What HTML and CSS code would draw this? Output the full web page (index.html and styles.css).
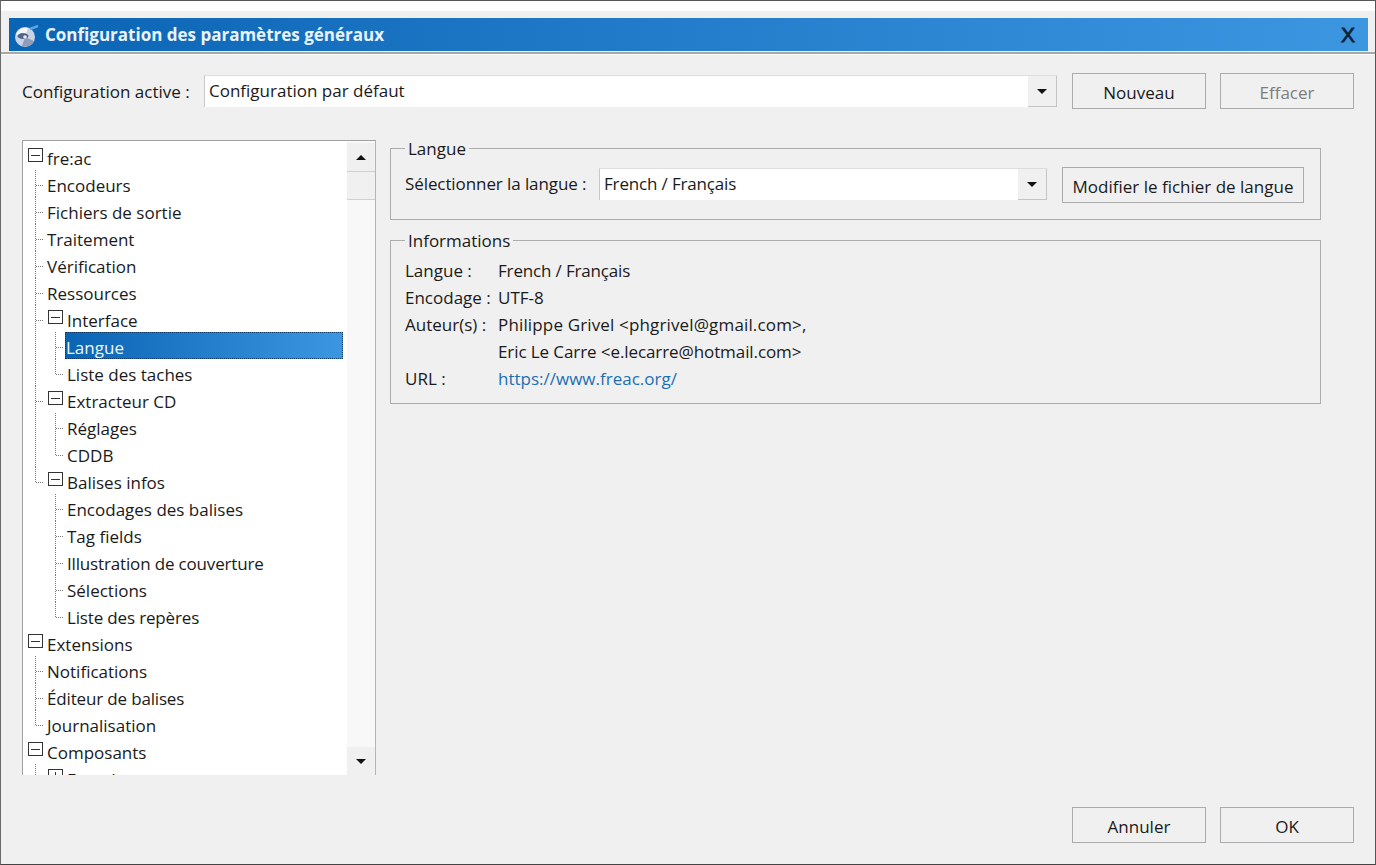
FILE: index.html
```html
<!DOCTYPE html>
<html lang="fr">
<head>
<meta charset="utf-8">
<title>Configuration des paramètres généraux</title>
<link rel="stylesheet" href="styles.css">
</head>
<body>
<div class="window">
  <div class="top-strip"></div>
  <header class="titlebar">
    <svg class="app-icon" width="26" height="24" viewBox="0 0 26 24">
      <circle cx="12" cy="14" r="10" fill="#c9d3e4"/>
      <path d="M3 12a10 10 0 0 1 12-7l-3 9z" fill="#f4f6fb"/>
      <path d="M12 14l9 4a10 10 0 0 1-12 5z" fill="#8f9dbb"/>
      <ellipse cx="10" cy="13" rx="5.500" ry="3" fill="#51658c"/>
      <circle cx="12" cy="14" r="1.800" fill="#e6ebf5"/>
      <path d="M17 6l8-3" stroke="#5aa5e6" stroke-width="2.500" fill="none"/>
    </svg>
    <span class="title-text">Configuration des paramètres généraux</span>
    <span class="close">X</span>
  </header>
  <div class="title-rule"></div>

  <div class="config-row">
    <span class="config-label">Configuration active :</span>
    <div class="combo combo-main">
      <span class="combo-value">Configuration par défaut</span>
      <span class="combo-btn"><i class="arrow-down"></i></span>
    </div>
    <button class="btn">Nouveau</button>
    <button class="btn btn-disabled">Effacer</button>
  </div>

  <main class="content">
    <nav class="tree">
      <ul class="tree-root">
        <li>
          <div class="row"><i class="box"></i><span class="label">fre:ac</span></div>
          <ul class="level1">
            <li><div class="row"><span class="label">Encodeurs</span></div></li>
            <li><div class="row"><span class="label">Fichiers de sortie</span></div></li>
            <li><div class="row"><span class="label">Traitement</span></div></li>
            <li><div class="row"><span class="label">Vérification</span></div></li>
            <li><div class="row"><span class="label">Ressources</span></div></li>
            <li>
              <div class="row"><i class="box"></i><span class="label">Interface</span></div>
              <ul class="level2">
                <li><div class="row"><span class="label selected">Langue</span></div></li>
                <li><div class="row"><span class="label">Liste des taches</span></div></li>
              </ul>
            </li>
            <li>
              <div class="row"><i class="box"></i><span class="label">Extracteur CD</span></div>
              <ul class="level2">
                <li><div class="row"><span class="label">Réglages</span></div></li>
                <li><div class="row"><span class="label">CDDB</span></div></li>
              </ul>
            </li>
            <li>
              <div class="row"><i class="box"></i><span class="label">Balises infos</span></div>
              <ul class="level2">
                <li><div class="row"><span class="label">Encodages des balises</span></div></li>
                <li><div class="row"><span class="label">Tag fields</span></div></li>
                <li><div class="row"><span class="label tight">Illustration de couverture</span></div></li>
                <li><div class="row"><span class="label">Sélections</span></div></li>
                <li><div class="row"><span class="label tight">Liste des repères</span></div></li>
              </ul>
            </li>
          </ul>
        </li>
        <li>
          <div class="row"><i class="box"></i><span class="label">Extensions</span></div>
          <ul class="level1">
            <li><div class="row"><span class="label">Notifications</span></div></li>
            <li><div class="row"><span class="label tight">Éditeur de balises</span></div></li>
            <li><div class="row"><span class="label">Journalisation</span></div></li>
          </ul>
        </li>
        <li>
          <div class="row"><i class="box"></i><span class="label">Composants</span></div>
          <ul class="level1">
            <li><div class="row"><i class="box box-plus"></i><span class="label">Encodeurs</span></div></li>
          </ul>
        </li>
      </ul>
      <div class="scrollbar">
        <span class="sb-btn"><i class="arrow-up"></i></span>
        <span class="sb-thumb"></span>
        <span class="sb-track"></span>
        <span class="sb-btn sb-btn-down"><i class="arrow-down"></i></span>
      </div>
    </nav>

    <section class="panel">
      <fieldset class="group group-lang">
        <legend>Langue</legend>
        <span class="lang-label tight-s">Sélectionner la langue :</span>
        <div class="combo combo-lang">
          <span class="combo-value tight">French / Français</span>
          <span class="combo-btn"><i class="arrow-down"></i></span>
        </div>
        <button class="btn btn-edit">Modifier le fichier de langue</button>
      </fieldset>
      <fieldset class="group group-info">
        <legend>Informations</legend>
        <dl class="info">
          <dt>Langue :</dt><dd class="tight">French / Français</dd>
          <dt>Encodage :</dt><dd>UTF-8</dd>
          <dt>Auteur(s) :</dt><dd class="wide">Philippe Grivel &lt;phgrivel@gmail.com&gt;,</dd>
          <dt></dt><dd class="tight-s">Eric Le Carre &lt;e.lecarre@hotmail.com&gt;</dd>
          <dt>URL :</dt><dd><a class="link" href="#">https://www.freac.org/</a></dd>
        </dl>
      </fieldset>
    </section>
  </main>

  <footer class="actions">
    <button class="btn">Annuler</button>
    <button class="btn">OK</button>
  </footer>
</div>
</body>
</html>
```

FILE: styles.css
```css
* { box-sizing: border-box; }
html, body { margin: 0; padding: 0; }
body {
  width: 1376px;
  height: 865px;
  overflow: hidden;
  font-family: "Open Sans", "Noto Sans", sans-serif;
  font-size: 17px;
  color: #1a1a1a;
  background: #f0f0f0;
}
ul { list-style: none; margin: 0; padding: 0; }
i { display: block; }
.tight { letter-spacing: -0.16px; }
.tight-s { letter-spacing: -0.09px; }
.wide { letter-spacing: 0.15px; }

.window {
  width: 1376px;
  height: 865px;
  display: flex;
  flex-direction: column;
  background: #f0f0f0;
  border-top: 1px solid #555;
  border-left: 1px solid #6a6a6a;
  border-bottom: 1px solid #444;
  border-right: 1px solid #555;
}
.top-strip { height: 10px; background: #fff; flex: none; }

.titlebar {
  flex: none;
  height: 33px;
  margin: 7px 7px 0 8px;
  padding: 0 13px 0 4px;
  display: flex;
  align-items: center;
  background: linear-gradient(90deg, #0a64b4 0%, #3c96e0 100%);
}
.app-icon { flex: none; margin-right: 6px; }
.title-text {
  flex: 1;
  font-size: 17px;
  font-weight: 700;
  color: #eaf3fb;
}
.close { font-size: 21px; font-weight: 400; color: #0c2238; font-family: "Liberation Sans", sans-serif; -webkit-text-stroke: 0.8px #0c2238; }
.title-rule {
  flex: none;
  height: 3px;
  margin-top: 1px;
  border-top: 1px solid #a8a8a8;
  border-bottom: 1px solid #fff;
  background: #a8a8a8;
}

.config-row {
  flex: none;
  height: 36px;
  margin-top: 18px;
  padding: 0 21px;
  display: flex;
  align-items: center;
}
.config-label { width: 182px; flex: none; }
.combo {
  display: flex;
  height: 32px;
  background: #fff;
  border-left: 1px solid #c8c8c8;
  border-top: 1px solid #ddd;
  flex: none;
}
.combo-main { width: 853px; margin-right: 15px; }
.combo-lang { width: 448px; margin-right: 15px; }
.combo-value { flex: 1; padding-left: 4px; line-height: 30px; }
.combo-btn {
  width: 29px;
  background: #f0f0f0;
  border: 1px solid #c4c4c4;
  border-width: 0 1px 1px 0;
  display: flex;
  align-items: center;
  justify-content: center;
}
.arrow-down { width: 0; height: 0; border: 5px solid transparent; border-top: 5px solid #111; border-bottom: 0; }
.arrow-up { width: 0; height: 0; border: 5px solid transparent; border-bottom: 5px solid #111; border-top: 0; }

.btn {
  flex: none;
  width: 134px;
  height: 36px;
  margin: 0;
  padding: 2px 0 0;
  font: inherit;
  color: #1a1a1a;
  background: #f0f0f0;
  border: 1px solid #ababab;
}
.btn + .btn { margin-left: 14px; }
.btn-disabled { color: #7d7d7d; }
.btn-edit { width: 242px; margin: -1px 0 0; height: 36px; }

.content {
  flex: 1;
  display: flex;
  min-height: 0;
  padding: 31px 0 0 21px;
}
.tree {
  flex: none;
  width: 354px;
  height: 635px;
  display: flex;
  background: #fff;
  border-left: 1px solid #a0a0a0;
  border-top: 1px solid #a0a0a0;
  border-right: 1px solid #b5b5b5;
}
.tree-root {
  flex: 1;
  min-width: 0;
  overflow: hidden;
  padding: 2px 4px 0 5px;
}
.row { display: flex; align-items: center; height: 27px; position: relative; }
.box {
  flex: none;
  width: 15px;
  height: 14px;
  margin: -3px 2px 0 0;
  border: 1px solid #333;
  background: linear-gradient(#333, #333) center / 9px 1px no-repeat #fff;
  position: relative;
  z-index: 1;
}
.box-plus {
  background:
    linear-gradient(#333, #333) center / 9px 1px no-repeat,
    linear-gradient(#333, #333) center / 1px 9px no-repeat,
    #fff;
}
.label { height: 27px; padding: 2px 2px 0; line-height: 27px; white-space: nowrap; }
.selected {
  flex: 1;
  color: #eef6fd;
  background: linear-gradient(90deg, #0a64b4 0%, #3c96e0 100%);
  outline: 1px dotted #083a6a;
  outline-offset: -1px;
  padding-left: 1px;
}

.level1 { margin-left: 7px; }
.level2 { margin-left: 20px; }
.level1 > li, .level2 > li { position: relative; }
.level1 > li > .row, .level2 > li > .row { padding-left: 10px; }
.level1 > li > .row > .box { margin-left: 3px; }
.level1 > li::before, .level2 > li::before {
  content: "";
  position: absolute;
  left: 0;
  top: 0;
  bottom: 0;
  border-left: 1px dotted #777;
}
.level1 > li:last-child::before, .level2 > li:last-child::before { bottom: auto; height: 15px; }
.level1 > li::after, .level2 > li::after {
  content: "";
  position: absolute;
  left: 1px;
  top: 15px;
  width: 7px;
  border-top: 1px dotted #777;
}

.scrollbar {
  flex: none;
  width: 28px;
  display: flex;
  flex-direction: column;
  padding-top: 2px;
  background: #f8f8f8;
}
.sb-btn {
  flex: none;
  height: 28px;
  background: #f0f0f0;
  display: flex;
  align-items: center;
  justify-content: center;
}
.sb-thumb { flex: none; height: 29px; background: #f0f0f0; border-top: 1px solid #d0d0d0; border-bottom: 1px solid #d0d0d0; }
.sb-track { flex: 1; }

.panel { flex: none; width: 931px; margin-left: 14px; }
.group {
  margin: 0;
  padding: 0;
  min-width: 0;
  border: 1px solid #adadad;
  position: relative;
}
.group legend { padding: 2px 3px 0; line-height: 24px; }
.group-lang {
  height: 85px;
  margin-top: -5px;
  padding: 0 16px 0 14px;
  display: flex;
  align-items: flex-start;
}
.lang-label { width: 194px; flex: none; line-height: 32px; margin-top: 7px; }
.group-lang .combo { margin-top: 7px; }
.group-lang .btn-edit { margin-top: 6px; }
.group-info { height: 177px; margin-top: 7px; padding: 4px 14px 0; }
.info {
  margin: 0;
  display: grid;
  grid-template-columns: 93px 1fr;
  grid-auto-rows: 27px;
  line-height: 27px;
}
.info dt, .info dd { margin: 0; white-space: nowrap; }
.link { color: #1b6fb3; text-decoration: none; }

.actions {
  flex: none;
  height: 57px;
  padding: 0 21px 20px 0;
  display: flex;
  justify-content: flex-end;
}
```
